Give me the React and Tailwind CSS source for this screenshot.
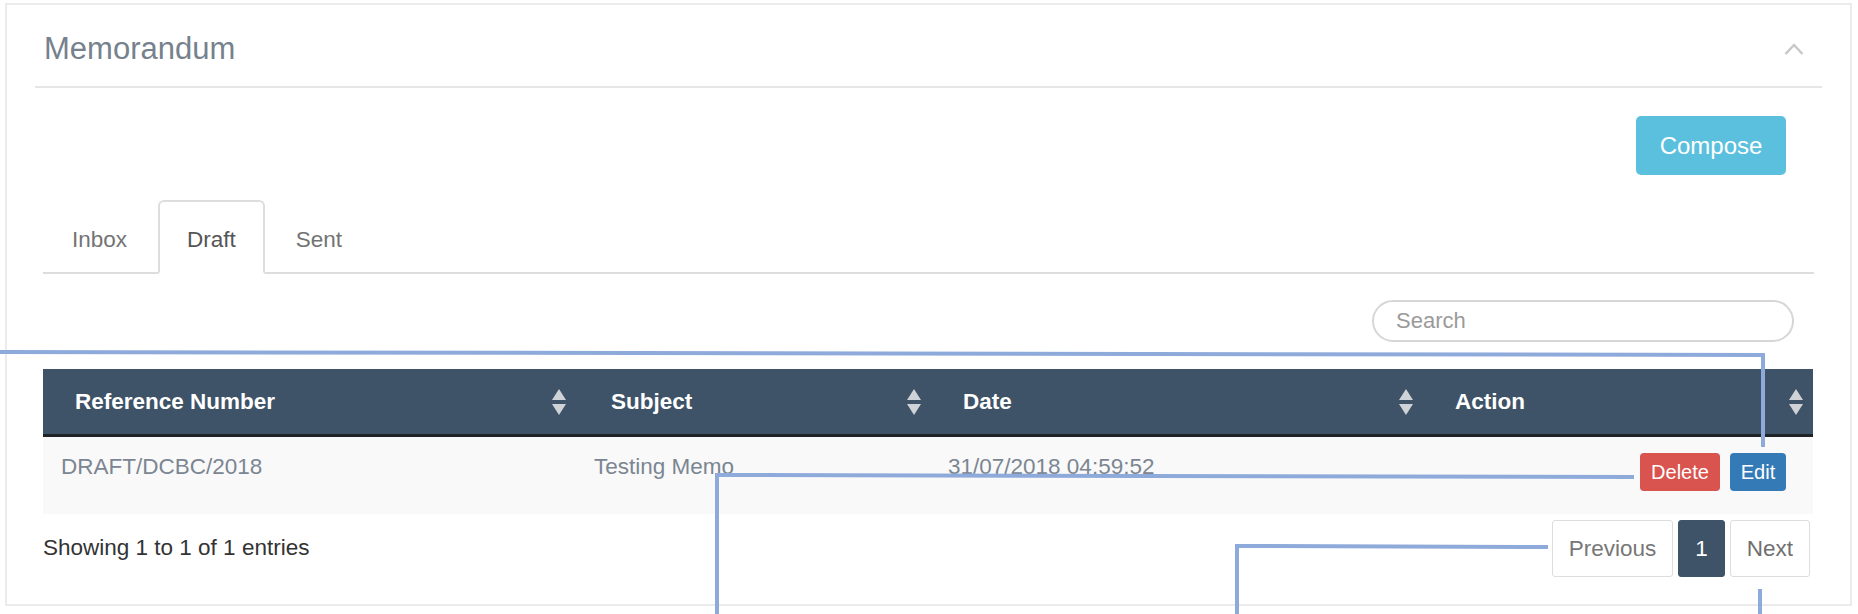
import React from "react";

const columns = [
  { label: "Reference Number", width: "w-[536px]" },
  { label: "Subject", width: "w-[352px]" },
  { label: "Date", width: "w-[492px]" },
  { label: "Action", width: "w-[390px]" },
];

function SortIcon() {
  return (
    <svg width="14" height="26" viewBox="0 0 14 26" className="shrink-0">
      <path d="M7 0 L14 11 L0 11 Z" fill="#cfd3d8" />
      <path d="M0 15 L14 15 L7 26 Z" fill="#cfd3d8" />
    </svg>
  );
}

function Callouts() {
  // blue annotation lines drawn over the screenshot
  return (
    <svg
      width="1858"
      height="614"
      className="absolute left-0 top-0 pointer-events-none"
      fill="none"
      stroke="#8eaadb"
      strokeWidth="4"
    >
      <polyline points="0,352 1763,355 1763,447" />
      <polyline points="1634,477 717,475 717,614" />
      <polyline points="1548,547 1237,546 1237,614" />
      <polyline points="1760,589 1760,614" />
    </svg>
  );
}

export default function App() {
  return (
    <div
      className="relative w-[1858px] h-[614px] overflow-hidden bg-white pl-[5px] pt-[3px]"
      style={{ fontFamily: '"Liberation Sans", Arial, sans-serif' }}
    >
      <div className="w-[1847px] h-[603px] border-2 border-[#ebebeb] bg-white">
        {/* panel header */}
        <div className="mx-[28px] flex items-center justify-between border-b-2 border-[#e6e6e6] pt-[25px] pb-[19px] pl-[9px] pr-[18px]">
          <h2 className="text-[31px] leading-[37px] text-[#76818d]">Memorandum</h2>
          <svg width="20" height="12" viewBox="0 0 20 12" fill="none">
            <path d="M1.5 11 L10 2 L18.5 11" stroke="#c8c8c8" strokeWidth="2.5" />
          </svg>
        </div>

        <div className="px-[36px]">
          <div className="flex justify-end pt-[28px] pr-[28px]">
            <button className="w-[150px] h-[59px] rounded-[5px] bg-[#5bc0de] text-[24px] text-white">
              Compose
            </button>
          </div>

          {/* tabs */}
          <ul className="mt-[25px] flex border-b-2 border-[#dddddd] text-[22.5px]">
            <li className="-mb-[2px] mr-[2px]">
              <span className="block border-2 border-transparent rounded-t-[6px] px-[27px] pt-[22px] pb-[16px] leading-[32px] text-[#737373]">
                Inbox
              </span>
            </li>
            <li className="-mb-[2px] mr-[2px]">
              <span className="block border-2 border-[#dddddd] border-b-white bg-white rounded-t-[6px] px-[27px] pt-[22px] pb-[16px] leading-[32px] text-[#555555]">
                Draft
              </span>
            </li>
            <li className="-mb-[2px] mr-[2px]">
              <span className="block border-2 border-transparent rounded-t-[6px] px-[27px] pt-[22px] pb-[16px] leading-[32px] text-[#737373]">
                Sent
              </span>
            </li>
          </ul>

          {/* search */}
          <div className="mt-[26px] flex justify-end pr-[20px]">
            <input
              type="text"
              placeholder="Search"
              className="w-[422px] h-[42px] rounded-full border-2 border-[#d6d6d6] pl-[22px] text-[22px] placeholder-[#9a9a9a] outline-none"
            />
          </div>

          {/* table */}
          <div className="mt-[27px] w-[1770px]">
            <div className="flex h-[68px] bg-[#3e5367] border-b-[3px] border-[#1f2327]">
              {columns.map((c, i) => (
                <div
                  key={c.label}
                  className={`${c.width} flex items-center justify-between pl-[32px] ${i === 0 ? "pr-[13px]" : "pr-[10px]"}`}
                >
                  <span className="text-[22.5px] font-bold text-white">{c.label}</span>
                  <SortIcon />
                </div>
              ))}
            </div>
            <div className="flex h-[77px] bg-[#f9f9f9] text-[22.5px] leading-[32px] text-[#7b8692]">
              <div className="w-[536px] pl-[18px] pt-[14px]">DRAFT/DCBC/2018</div>
              <div className="w-[352px] pl-[15px] pt-[14px]">Testing Memo</div>
              <div className="w-[492px] pl-[17px] pt-[14px]">31/07/2018 04:59:52</div>
              <div className="w-[390px] flex justify-end gap-[10px] pr-[27px] pt-[16px]">
                <button className="w-[80px] h-[38px] rounded-[4px] bg-[#d9534f] text-[20px] leading-none text-white">
                  Delete
                </button>
                <button className="w-[56px] h-[38px] rounded-[4px] bg-[#337ab7] text-[20px] leading-none text-white">
                  Edit
                </button>
              </div>
            </div>

            {/* footer */}
            <div className="flex items-start justify-between pr-[3px]">
              <div className="mt-[18px] text-[22.5px] leading-[32px] text-[#333333]">
                Showing 1 to 1 of 1 entries
              </div>
              <div className="mt-[6px] flex gap-[5px] text-[22.5px]">
                <span className="h-[57px] flex items-center rounded-[3px] border border-[#dddddd] bg-white px-[16px] text-[#777777]">
                  Previous
                </span>
                <span className="h-[57px] flex items-center rounded-[3px] border border-[#3e5367] bg-[#3e5367] px-[16px] text-white">
                  1
                </span>
                <span className="h-[57px] flex items-center rounded-[3px] border border-[#dddddd] bg-white px-[16px] text-[#6f6f6f]">
                  Next
                </span>
              </div>
            </div>
          </div>
        </div>
      </div>
      <Callouts />
    </div>
  );
}
